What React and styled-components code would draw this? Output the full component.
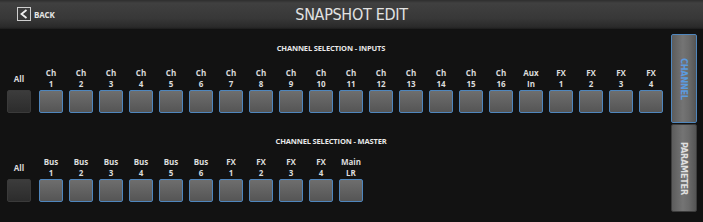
import React from 'react';
import styled, { createGlobalStyle } from 'styled-components';

const GlobalStyle = createGlobalStyle`
  html, body {
    margin: 0;
    padding: 0;
    background: #121212;
    font-family: "Open Sans", "DejaVu Sans", sans-serif;
  }
`;

const Screen = styled.div`
  width: 703px;
  height: 222px;
  display: flex;
  flex-direction: column;
  background: #121212;
  overflow: hidden;
`;

const Header = styled.div`
  position: relative;
  height: 29px;
  flex: none;
  display: flex;
  align-items: center;
  justify-content: center;
  background: linear-gradient(to bottom, #2e2e2e 0px, #404040 3px, #383838 18px, #2a2a2a 27px, #1c1c1c 29px);
`;

const BackButton = styled.div`
  position: absolute;
  left: 17px;
  top: 7px;
  display: flex;
  align-items: center;
  gap: 3px;
  color: #e6e6e6;
  font-size: 8px;
  font-weight: 700;
  letter-spacing: -0.2px;
`;

const BackBox = styled.div`
  width: 12px;
  height: 12px;
  border: 1px solid #cfcfcf;
  display: flex;
  align-items: center;
  justify-content: center;
`;

const Title = styled.div`
  color: #e2e2e2;
  font-size: 16px;
  font-weight: 400;
  letter-spacing: -0.3px;
  font-family: "DejaVu Sans Condensed", "Open Sans", sans-serif;
`;

const Body = styled.div`
  flex: 1;
  display: flex;
  padding: 5px 6px 0 0;
  gap: 7px;
`;

const Main = styled.div`
  flex: 1;
  display: flex;
  flex-direction: column;
`;

const Section = styled.div`
  display: flex;
  flex-direction: column;
  padding-left: 7px;
  margin-top: ${(p) => p.$top}px;
`;

const SectionTitle = styled.div`
  text-align: center;
  color: #e8e8e8;
  font-size: 7.5px;
  font-weight: 700;
  line-height: 10px;
  height: 10px;
  letter-spacing: -0.15px;
  padding-right: 9px;
  margin-bottom: ${(p) => p.$gap}px;
`;

const Row = styled.div`
  display: flex;
  gap: 6px;
`;

const Cell = styled.div`
  width: 24px;
  display: flex;
  flex-direction: column;
  align-items: center;
  margin-right: ${(p) => (p.$all ? 2 : 0)}px;
`;

const Label = styled.div`
  height: 22px;
  display: flex;
  flex-direction: column;
  align-items: center;
  justify-content: center;
  color: #dcdcdc;
  font-size: 8px;
  font-weight: 700;
  line-height: 11px;
  margin-bottom: 1px;
  white-space: nowrap;
`;

const Key = styled.div`
  width: 24px;
  height: 23px;
  box-sizing: border-box;
  border-radius: 2px;
  border: 1px solid ${(p) => (p.$all ? '#3a3a3a' : '#4f86bd')};
  background: ${(p) =>
    p.$all
      ? 'linear-gradient(to bottom, #3c3c3c, #2c2c2c)'
      : 'linear-gradient(to bottom, #6e6e6e, #555555)'};
`;

const Sidebar = styled.div`
  width: 26px;
  display: flex;
  flex-direction: column;
  gap: 1px;
`;

const Tab = styled.div`
  height: ${(p) => p.$h}px;
  box-sizing: border-box;
  border-radius: 2px;
  border: 1px solid ${(p) => (p.$active ? '#4f86bd' : '#3c3c3c')};
  background: linear-gradient(to right, #5c5c5c, #747474 45%, #6a6a6a 70%, #555555);
  display: flex;
  align-items: center;
  justify-content: center;
  color: ${(p) => (p.$active ? '#5b9be0' : '#e0e0e0')};
  font-family: "DejaVu Sans Condensed", "Open Sans", sans-serif;
  font-size: 9px;
  font-weight: 700;
  writing-mode: vertical-rl;
  letter-spacing: -0.2px;
`;

const TabText = styled.span`
  display: block;
`;

const inputs = [
  ...Array.from({ length: 16 }, (_, i) => ['Ch', String(i + 1)]),
  ['Aux', 'In'],
  ['FX', '1'],
  ['FX', '2'],
  ['FX', '3'],
  ['FX', '4'],
];

const master = [
  ...Array.from({ length: 6 }, (_, i) => ['Bus', String(i + 1)]),
  ['FX', '1'],
  ['FX', '2'],
  ['FX', '3'],
  ['FX', '4'],
  ['Main', 'LR'],
];

function Selection({ title, items, top, gap }) {
  return (
    <Section $top={ top }>
      <SectionTitle $gap={ gap }>{ title }</SectionTitle>
      <Row>
        <Cell $all>
          <Label>All</Label>
          <Key $all />
        </Cell>
        { items.map(([a, b], i) => (
          <Cell key={ i }>
            <Label>
              <span>{ a }</span>
              <span>{ b }</span>
            </Label>
            <Key />
          </Cell>
        )) }
      </Row>
    </Section>
  );
}

export default function App() {
  return (
    <Screen>
      <GlobalStyle />
      <Header>
        <BackButton>
          <BackBox>
            <svg width="10" height="10" viewBox="0 0 10 10">
              <path d="M7.5 1 L2.5 5 L7.5 9" fill="none" stroke="#f0f0f0" strokeWidth="1.8" />
            </svg>
          </BackBox>
          BACK
        </BackButton>
        <Title>SNAPSHOT EDIT</Title>
      </Header>
      <Body>
        <Main>
          <Selection title="CHANNEL SELECTION - INPUTS" items={ inputs } top={ 9 } gap={ 14 } />
          <Selection title="CHANNEL SELECTION - MASTER" items={ master } top={ 23 } gap={ 10 } />
        </Main>
        <Sidebar>
          <Tab $active $h={ 89 }>
            <TabText>CHANNEL</TabText>
          </Tab>
          <Tab $h={ 88 }>
            <TabText>PARAMETER</TabText>
          </Tab>
        </Sidebar>
      </Body>
    </Screen>
  );
}
